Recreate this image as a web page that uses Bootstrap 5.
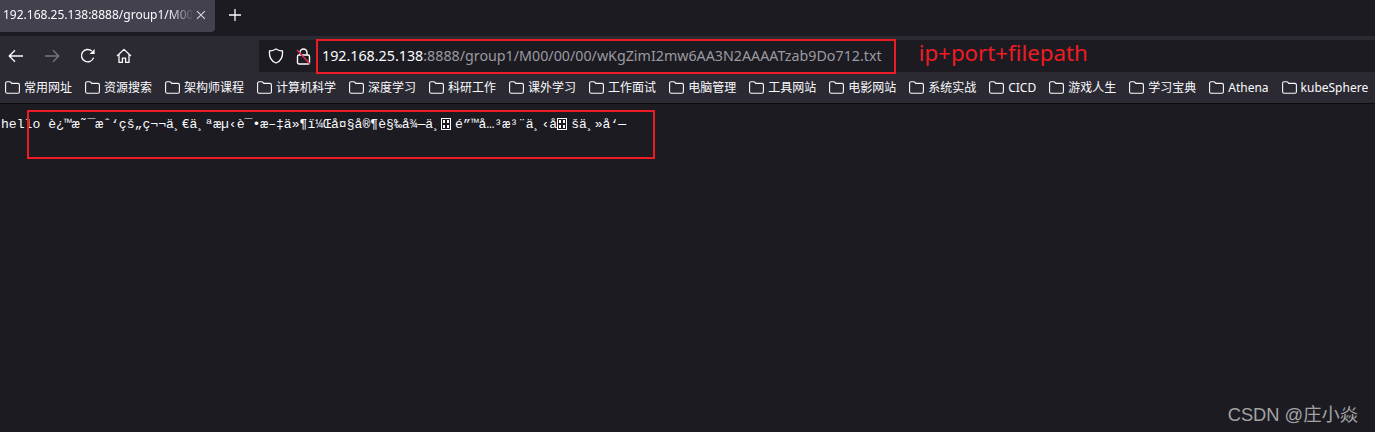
<!DOCTYPE html>
<html lang="en">
<head>
<meta charset="UTF-8">
<title>192.168.25.138:8888/group1/M00/00/00/wKgZimI2mw6AA3N2AAAATzab9Do712.txt</title>
<link href="https://cdn.jsdelivr.net/npm/bootstrap@5.3.0/dist/css/bootstrap.min.css" rel="stylesheet">
<style>
  html, body { height: 100%; background: #1c1b22; overflow: hidden; }
  body { position: relative; font-family: "Noto Sans", "Noto Sans CJK SC", sans-serif; color: #fbfbfe; }
  .tab-strip { height: 36px; background: #1c1b22; }
  .page-tab { width: 215px; height: 32px; background: #42414d; border-radius: 0 0 4px 0; padding: 0 9px 2px 3px; font-size: 12px; }
  .tab-title { width: 192px; white-space: nowrap; overflow: hidden; -webkit-mask-image: linear-gradient(to right, #000 165px, transparent 192px); mask-image: linear-gradient(to right, #000 165px, transparent 192px); }
  .new-tab { margin-left: 13px; }
  .tool-row { height: 36px; background: #2b2a33; padding-top: 4px; }
  .nav-btns { width: 259px; padding-left: 8px; padding-bottom: 1px; gap: 20px; }
  .url-box { background: #1c1b22; height: 32px; padding-left: 9px; }
  .lock-ico { margin-left: 12px; }
  .url-text { font-size: 14.27px; margin-left: 11px; white-space: nowrap; color: #9a9aa0; }
  .url-text b { font-weight: 400; color: #fbfbfe; }
  .note-red { color: #ed1c24; font-size: 22.3px; margin-left: 37px; margin-top: -6px; white-space: nowrap; }
  .mark-row { height: 32px; background: #2b2a33; border-bottom: 1px solid #0c0c0d; padding-left: 5px; gap: 13px; font-size: 12px; white-space: nowrap; }
  .mark-item { gap: 4px; color: #fbfbfe; }
  .txt-body { font-family: "Liberation Mono", "DejaVu Sans Mono", monospace; font-size: 13.1px; line-height: 16px; margin: 0; padding: 13px 0 0 1px; color: #fbfbfe; white-space: pre; overflow: visible; background: transparent; }
  .ctl-box { display: inline-block; width: 10px; height: 12px; margin-right: 4px; vertical-align: -2px; }
  .red-box { position: absolute; border: 2px solid #ed1c24; }
  .red-url { left: 316px; top: 39px; width: 580px; height: 35px; }
  .red-txt { left: 27px; top: 110px; width: 628px; height: 49px; }
  .wm { position: absolute; right: 17px; top: 401px; font-size: 18.3px; color: #a3a3a6; font-family: "Liberation Sans", "Noto Sans CJK SC", sans-serif; }
</style>
</head>
<body>
  <div class="tab-strip d-flex align-items-start">
    <div class="page-tab d-flex align-items-center">
      <div class="tab-title">192.168.25.138:8888/group1/M00</div>
      <svg width="10" height="10" viewBox="0 0 10 10" class="ms-1"><path d="M1 1l8 8M9 1l-8 8" stroke="#d8d8dc" stroke-width="1.1" fill="none"/></svg>
    </div>
    <svg class="new-tab mt-2" width="14" height="14" viewBox="0 0 14 14"><path d="M7 1v12M1 7h12" stroke="#fbfbfe" stroke-width="1.3" fill="none"/></svg>
  </div>

  <div class="tool-row d-flex">
    <div class="nav-btns d-flex align-items-center">
      <svg width="16" height="14" viewBox="0 0 16 14" fill="none" stroke="#fbfbfe" stroke-width="1.3"><path d="M15 7H1.5M7 1.2L1.2 7 7 12.8"/></svg>
      <svg width="16" height="14" viewBox="0 0 16 14" fill="none" stroke="#77767d" stroke-width="1.3"><path d="M1 7h13.5M9 1.2L14.8 7 9 12.8"/></svg>
      <svg width="16" height="16" viewBox="0 0 16 16" fill="none" stroke="#fbfbfe" stroke-width="1.4"><path d="M13.6 9.6A6.2 6.2 0 1 1 11.8 3"/><path d="M14.6 1v5h-5z" fill="#fbfbfe" stroke="none"/></svg>
      <svg width="16" height="16" viewBox="0 0 16 16" fill="none" stroke="#fbfbfe" stroke-width="1.3" stroke-linejoin="round"><path d="M1 8l7-6.6L15 8M3 6.4v8h3.4v-4.2h3.2v4.2H13v-8"/></svg>
    </div>
    <div class="url-box flex-grow-1 d-flex align-items-center">
      <svg width="16" height="16" viewBox="0 0 16 16" fill="none" stroke="#fbfbfe" stroke-width="1.3" stroke-linejoin="round"><path d="M8 1c2 1.3 4.3 2 6.6 2 .3 6-2 10.400-6.600 12C3.400 13.400 1.100 9 1.400 3 3.700 3 6 2.300 8 1z"/></svg>
      <svg class="lock-ico" width="15" height="17" viewBox="0 0 15 17" fill="none"><rect x="1.500" y="7" width="12" height="9" rx="1.500" stroke="#fbfbfe" stroke-width="1.400"/><path d="M4 7V4.500a3.500 3.500 0 0 1 7 0V7" stroke="#fbfbfe" stroke-width="1.400"/><path d="M1 2l13 14" stroke="#e22850" stroke-width="1.500"/></svg>
      <span class="url-text"><b>192.168.25.138</b>:8888/group1/M00/00/00/wKgZimI2mw6AA3N2AAAATzab9Do712.txt</span>
      <span class="note-red">ip+port+filepath</span>
    </div>
  </div>

  <div class="mark-row d-flex align-items-center" id="marks"></div>

  <pre class="txt-body" id="txt"></pre>

  <div class="red-box red-url"></div>
  <div class="red-box red-txt"></div>
  <div class="wm">CSDN @庄小焱</div>

  <script>
    const names = ['常用网址','资源搜索','架构师课程','计算机科学','深度学习','科研工作','课外学习','工作面试','电脑管理','工具网站','电影网站','系统实战','CICD','游戏人生','学习宝典','Athena','kubeSphere'];
    const folder = '<svg width="15" height="13" viewBox="0 0 15 13" fill="none" stroke="#fbfbfe" stroke-width="1.100" stroke-linejoin="round"><path d="M.6 2.200c0-.9.6-1.500 1.500-1.500h2.600c.6 0 1 .2 1.300.7l.7 1h6.200c.9 0 1.500.6 1.500 1.500v6.800c0 .9-.6 1.500-1.500 1.500H2.100c-.9 0-1.500-.6-1.500-1.500z"/></svg>';
    document.getElementById('marks').innerHTML = names.map(n =>
      `<div class="mark-item d-flex align-items-center">${folder}<span>${n}</span></div>`).join('');

    // utf-8 read as windows-1252; the two 0x8D bytes show as hex boxes
    const box = '<svg class="ctl-box" viewBox="0 0 10 12"><rect x=".5" y=".5" width="9" height="11" fill="none" stroke="#fbfbfe"/><path d="M2 2h2v3H2zM6 2h2v3H6zM2 7h2v3H2zM6 7h2v3H6z" fill="#fbfbfe"/></svg>';
    document.getElementById('txt').innerHTML =
      'hello è¿™æ˜¯æˆ‘çš„ç¬¬ä¸€ä¸ªæµ‹è¯•æ–‡ä»¶ï¼Œå¤§å®¶è§‰å¾—ä¸' + box + 'é”™å…³æ³¨ä¸‹å' + box + 'šä¸»å‘—';
  </script>
  <script src="https://cdn.jsdelivr.net/npm/bootstrap@5.3.0/dist/js/bootstrap.bundle.min.js"></script>
</body>
</html>
